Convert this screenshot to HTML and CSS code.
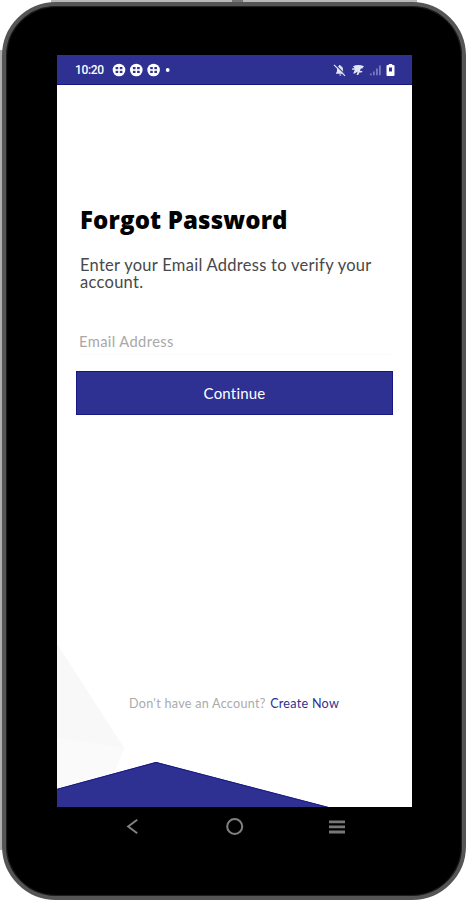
FILE: index.html
```
<!DOCTYPE html>
<html lang="en">
<head>
<meta charset="utf-8">
<title>Forgot Password</title>
<link rel="stylesheet" href="styles.css">
</head>
<body>
<div class="stage">
<div class="device">
  <main class="screen">
    <header class="status">
      <span class="time">10:20</span>
      <svg class="notices" width="60" height="14" viewBox="0 0 60 14" fill="#fff">
        <defs><g id="notice"><circle cx="7" cy="7" r="6.3"/><g fill="#2e3192"><rect x="3.6" y="4" width="2.6" height="2.2"/><rect x="7.8" y="4" width="2.6" height="2.2"/><rect x="3.6" y="7.8" width="2.6" height="2.2"/><rect x="7.8" y="7.8" width="2.6" height="2.2"/></g></g></defs>
        <use href="#notice"/><use href="#notice" x="17.3"/><use href="#notice" x="34.6"/>
        <circle cx="55.7" cy="7" r="1.9"/>
      </svg>
      <svg class="system" width="62" height="14" viewBox="0 0 62 14" fill="#e3e4f5">
        <path d="M3 10c1-1 1-2 1-4 0-2 1-3 2-3V2h1.5v1c2 .3 2.5 2 2.5 4s.3 2 1.5 3v.8H3zM6 11.5h2.5L7.2 13z"/>
        <path d="M1.8 1.2 12.6 12" stroke="#2e3192" stroke-width="1.2"/><path d="M1 1.8 12 12.8" stroke="#e3e4f5" stroke-width="1.2"/>
        <path d="M20 3.2Q25 .6 31 3.2L29.2 5.6H27.8L27 8h2.6l-1 1.6h-2.2L25.2 12h-1.6l1-3.4-2.8 2h-1.6l1.6-3.8h-3l.6-1.5h2.2z"/>
        <g fill="#7779bb"><path d="M37 10.5h1.8v1.8H37zM40 8.5h1.8v3.8H40zM43 5.5h1.9v6.8H43zM46 2.5h1.8v9.8H46z"/></g>
        <path fill="#fff" d="M54.5 2h1.3V1h3.4v1h1.3q1 0 1 1v9q0 1-1 1h-6q-1 0-1-1V3q0-1 1-1z"/><path fill="#2e3192" d="M56 4.5h3v4h-3z"/>
      </svg>
    </header>
    <section class="content">
      <h1>Forgot Password</h1>
      <p class="intro">Enter your Email Address to verify your<br>account.</p>
      <div class="field">Email Address</div>
      <div class="button">Continue</div>
    </section>
    <footer class="signup"><span>Don't have an Account?</span> <a>Create Now</a></footer>
    <svg class="backdrop" width="355" height="170" viewBox="0 0 355 170">
      <path fill="#f8f8f8" d="M0 7 67 111 52 147 0 170z"/>
      <path fill="#fafafa" d="M0 101 67 111 52 147 0 170z"/>
      <path fill="#2e3192" d="M0 152 99 125 271 170H0z"/>
      <path fill="none" stroke="#171783" d="M0 152.3 99 125.4 271 170.3"/>
    </svg>
  </main>
  <nav class="keys">
    <svg width="232" height="20" viewBox="0 0 232 20" fill="none" stroke="#808080" stroke-width="2">
      <path d="M15.2 3.8 6.2 10.5 15.2 17.3"/><circle cx="112.7" cy="10.5" r="7.5"/>
      <path stroke="#777" stroke-width="2.8" d="M207 5.8h16M207 10.9h16M207 16h16"/>
    </svg>
  </nav>
</div>
</div>
</body>
</html>
```
FILE: styles.css
```
* { box-sizing: border-box; }
body { margin: 0; background: #fff; }
.stage {
  width: 466px;
  height: 900px;
  padding: 2px 0 0 2px;
  overflow: hidden;
  background:
    linear-gradient(#777, #777) 232px 0 / 11px 2px no-repeat,
    linear-gradient(#b9b9b9, #b9b9b9) 51px 0 / 366px 3px no-repeat,
    linear-gradient(#b0b0b0, #b0b0b0) 0 50px / 3px 800px no-repeat,
    #fff;
}
.device {
  width: 464px;
  height: 898px;
  padding: 49px 0 0 51px;
  border: 4px solid #555;
  border-radius: 54px;
  background: #000;
  box-shadow: inset 0 0 1px 1px #222;
}
.screen {
  position: relative;
  display: flex;
  flex-direction: column;
  width: 355px;
  height: 752px;
  background: #fff;
  font-family: Lato, sans-serif;
}
.status {
  display: flex;
  align-items: center;
  flex: none;
  height: 30px;
  padding: 0 17px 0 18px;
  background: #2e3192;
  border-bottom: 1px solid #171783;
  color: #fff;
}
.time {
  width: 37px;
  font: 500 12px/14px Roboto, sans-serif;
  letter-spacing: -.35px;
}
.system { margin-left: auto; }
.content { flex: 1; padding: 119px 19px 0; }
h1 {
  margin: 0 4px;
  font: 800 24px/32px "Open Sans", sans-serif;
  letter-spacing: .15px;
  color: #000;
  white-space: nowrap;
}
.intro {
  margin: 21px 4px 0;
  font-size: 16.5px;
  line-height: 17px;
  letter-spacing: .28px;
  color: #484848;
  white-space: nowrap;
}
.field {
  height: 31px;
  margin: 33px 3px 0;
  font-size: 14.7px;
  line-height: 34px;
  letter-spacing: .4px;
  color: #a8a8a8;
  border-bottom: 1px solid #fafafa;
}
.button {
  height: 44px;
  margin-top: 16px;
  width: 317px;
  border: 1px solid #171783;
  background: #2e3192;
  color: #fff;
  text-align: center;
  font-size: 15px;
  line-height: 43px;
  letter-spacing: .2px;
}
.signup {
  position: relative;
  z-index: 1;
  height: 112px;
  padding-left: 72px;
  font-size: 12.6px;
  line-height: 17px;
  letter-spacing: .27px;
  color: #aaa;
  white-space: nowrap;
}
.signup a { margin-left: 1px; color: #2e3192; }
.backdrop { position: absolute; left: 0; bottom: 0; }
.keys { height: 42px; padding: 9px 0 0 65px; }
```
